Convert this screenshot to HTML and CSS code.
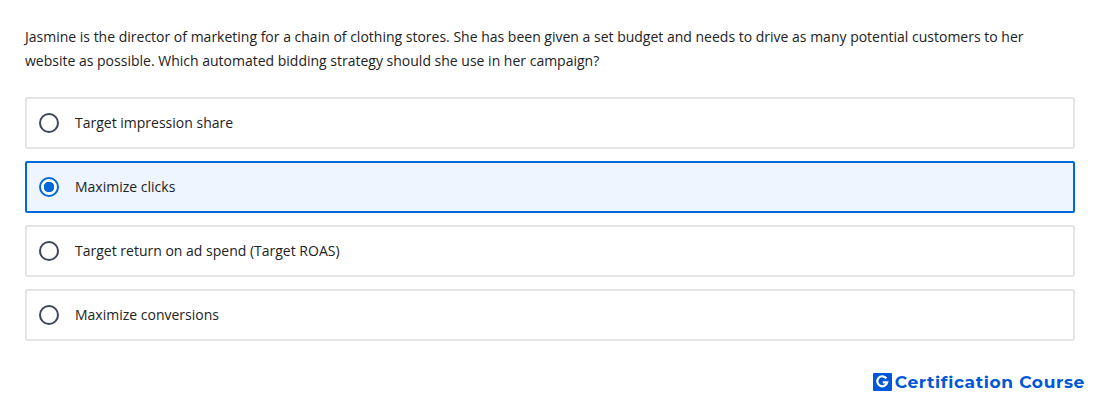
FILE: index.html
```html
<!DOCTYPE html>
<html lang="en">
<head>
<meta charset="UTF-8" />
<title>Certification Course</title>
<meta name="viewport" content="width=device-width, initial-scale=1.0" />
<link rel="stylesheet" href="styles.css">
</head>
<body>
<form class="quiz">
  <p class="question">Jasmine is the director of marketing for a chain of clothing stores. She has been given a set budget and needs to drive as many potential customers to her website as possible. Which automated bidding strategy should she use in her campaign?</p>
  <div class="options">
    <label class="option"><input type="radio" name="answer"><span>Target impression share</span></label>
    <label class="option selected"><input type="radio" name="answer" checked><span>Maximize clicks</span></label>
    <label class="option"><input type="radio" name="answer"><span>Target return on ad spend (Target ROAS)</span></label>
    <label class="option"><input type="radio" name="answer"><span>Maximize conversions</span></label>
  </div>
</form>
<footer class="brand">
  <svg class="brand-logo" viewBox="0 0 19 18" width="19" height="18">
    <rect width="19" height="18" rx="1" fill="#0057d8"/>
    <path d="M13.4 5.4A5 5 0 1 0 14.2 9.3H9.8" fill="none" stroke="#fff" stroke-width="2.2"/>
  </svg>
  <span class="brand-name">Certification Course</span>
</footer>
</body>
</html>
```
FILE: styles.css
```css
* {
  box-sizing: border-box;
}
body {
  margin: 0;
  background: #fff;
  color: #222;
  font-family: "Open Sans", sans-serif;
  font-size: 14px;
}
.quiz {
  padding: 25px 25px 0;
}
.question {
  margin: 0 0 24px;
  line-height: 24px;
}
.options {
  display: flex;
  flex-direction: column;
  gap: 12px;
}
.option {
  display: flex;
  align-items: center;
  gap: 16px;
  height: 52px;
  padding: 0 12px;
  border: 2px solid #e5e5e5;
  border-radius: 2px;
  line-height: 24px;
}
.option.selected {
  border-color: #0068d9;
  background: #eef5ff;
}
.option input {
  appearance: none;
  width: 20px;
  height: 20px;
  margin: 0;
  border: 2px solid #3f4857;
  border-radius: 50%;
  background: #fff;
}
.option input:checked {
  border-color: #0068d9;
  background: radial-gradient(circle, #0068d9 5px, #fff 5.5px);
}
.brand {
  display: flex;
  align-items: center;
  justify-content: flex-end;
  gap: 3px;
  margin-top: 31px;
  padding-right: 15px;
}
.brand-name {
  color: #0057d8;
  font-family: Montserrat, "Open Sans", sans-serif;
  font-size: 17px;
  font-weight: 700;
  line-height: 20px;
  letter-spacing: 0.65px;
}
```
